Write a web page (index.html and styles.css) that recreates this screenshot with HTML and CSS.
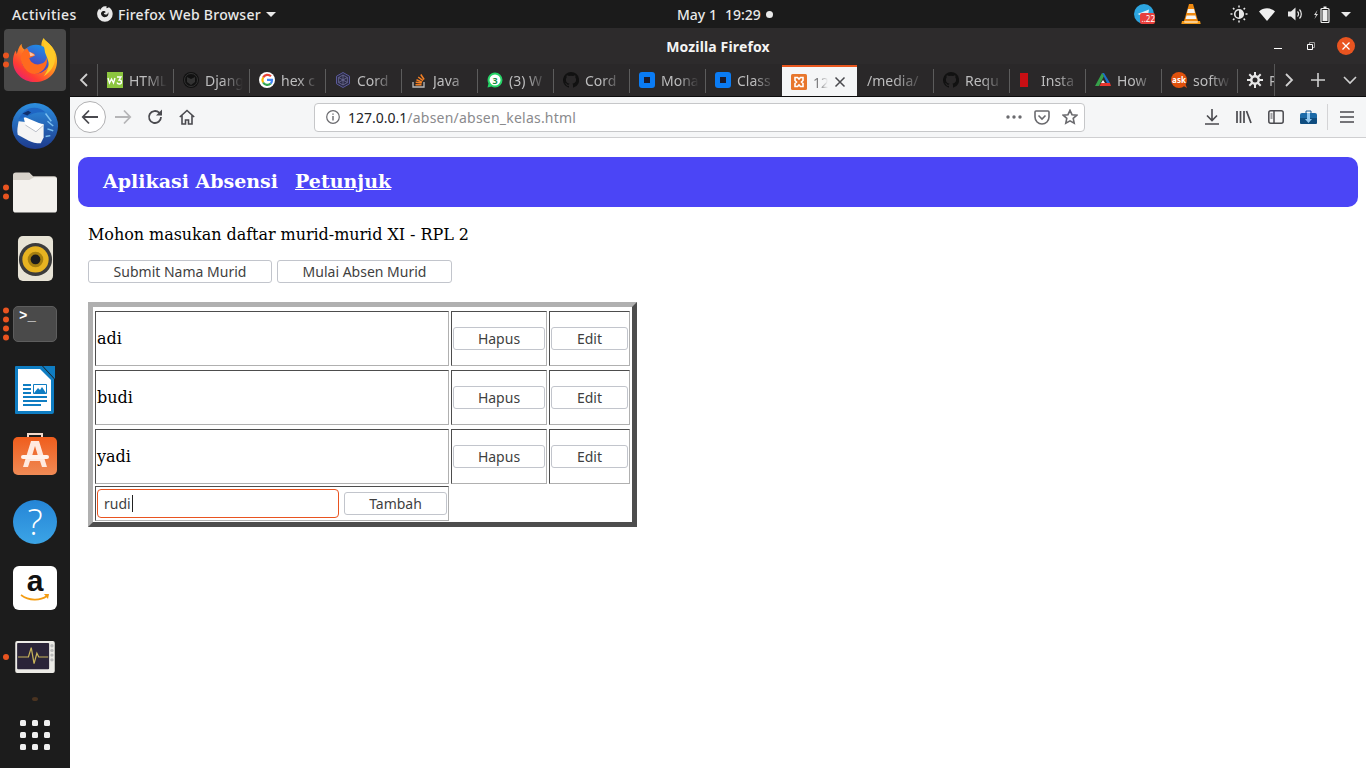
FILE: index.html
```html
<!DOCTYPE html>
<html lang="id">
<head>
<meta charset="utf-8">
<title>Mozilla Firefox</title>
<link rel="stylesheet" href="styles.css">
</head>
<body>
<header class="topbar">
  <div class="top-left">
    <span class="activities">Activities</span>
    <svg class="top-ff" width="18" height="18" viewBox="0 0 18 18"><path fill="#e8e8e8" d="M9 1.200c.6 0 1.200.1 1.800.2-.5.6-.5 1.300-.2 1.900 1.200-.3 2.200-1.300 2.400-1 2.200 1.400 3.700 3.800 3.700 6.700a7.800 7.800 0 1 1-15.600 0c0-2.200.9-4.200 2.300-5.600.1.800.4 1.300.8 1.700C4.900 3.300 6.800 1.200 9 1.200z"/><path fill="#1b1b1b" d="M6.200 6.500c1.500-.9 3-.2 3.600.7-.8.5-1.600.6-2 1 .3 1 1.500 1.700 2.700 1.300 1.100-.3 1.600-1.300 1.500-2.500 1.100 2 .1 4.500-2.100 5.100-2.300.6-4.500-.8-4.900-3-.1-1 .3-1.900 1.200-2.600z"/></svg>
    <span class="app-name">Firefox Web Browser</span>
    <span class="caret"></span>
  </div>
  <div class="clock"><span>May 1</span><span>19:29</span><i class="clock-dot"></i></div>
  <div class="tray">
    <span class="tray-telegram"><svg width="20" height="20" viewBox="0 0 20 20"><circle cx="10" cy="10" r="10" fill="#2ca5e0"/><path fill="#dff1fa" d="M3.500 10 15 5.500 13.500 14z"/></svg><b class="tray-badge">..22</b></span>
    <svg class="tray-vlc" width="20" height="22" viewBox="0 0 20 22"><path fill="#f08a10" d="M8 1h4l5 17H3z"/><path fill="#f4f4f4" d="M7 6h6l1 4H6zM5.600 12.500h8.800l1 3.500H4.600z"/><path fill="#f59a16" d="M1 18h18l.7 3H.3z"/><path fill="#fff" d="M3 18.500h14l-.5 1h-13z"/></svg>
    <svg class="tray-sun" width="18" height="18" viewBox="0 0 18 18"><circle cx="9" cy="9" r="4.300" fill="none" stroke="#e8e8e8" stroke-width="1.600"/><path fill="#e8e8e8" d="M9 4.700a4.300 4.300 0 0 1 0 8.600z"/><path stroke="#e8e8e8" stroke-width="1.500" d="M9 .5v2M9 15.500v2M.5 9h2M15.500 9h2M3 3l1.400 1.400M13.600 13.600 15 15M3 15l1.400-1.400M13.600 4.400 15 3"/></svg>
    <svg class="tray-wifi" width="16" height="13" viewBox="0 0 16 13"><path fill="#f0f0f0" d="M0 3.500C4.500-.8 11.500-.8 16 3.500L8 13z"/></svg>
    <svg class="tray-vol" width="16" height="14" viewBox="0 0 16 14"><path fill="#e8e8e8" d="M0 4.500h3L7.500.5v13L3 9.500H0z"/><path fill="none" stroke="#e8e8e8" stroke-width="1.200" d="M9.500 4.500a3.500 3.500 0 0 1 0 5M11.500 2.500a6.500 6.500 0 0 1 0 9"/></svg>
    <svg class="tray-bat" width="16" height="17" viewBox="0 0 16 17"><path fill="#ddd" d="M3.500 4 0 9h2l-1.500 4L4 8H2z"/><rect x="7" y="2.500" width="8" height="14" rx="1" fill="none" stroke="#eee" stroke-width="1.200"/><rect x="9.500" y=".5" width="3" height="2" fill="#eee"/><rect x="8.500" y="4" width="5" height="11" fill="#eee"/></svg>
    <span class="caret"></span>
  </div>
</header>

<nav class="dock">
  <div class="dock-item is-active">
    <span class="pips"><i></i><i></i></span>
    <svg width="46" height="46" viewBox="0 0 48 48"><defs><linearGradient id="ffa" x1="0.900" y1="0" x2="0.100" y2="1"><stop offset="0" stop-color="#ffe226"/><stop offset=".4" stop-color="#ff9a1e"/><stop offset=".75" stop-color="#ff3d33"/><stop offset="1" stop-color="#e31587"/></linearGradient><linearGradient id="ffb" x1="0.700" y1="0" x2="0.300" y2="1"><stop offset="0" stop-color="#1d8fe8"/><stop offset="1" stop-color="#5b2bb0"/></linearGradient></defs><path fill="url(#ffa)" d="M24 47C11 47 1 37 1 25c0-4 1-8 3-11l1 4c1-4 2-8 5-11 0 3 1 5 3 6 3-2 7-3 11-3 3 0 5 0 7 1-1-3 0-7 2-10 2 4 7 6 10 11 3 4 4 9 4 13 0 13-10 22-23 22z"/><circle cx="25" cy="23" r="15" fill="url(#ffb)"/><path fill="#ffca28" d="M34 3c6 4 11 10 11 19 0 8-5 15-12 19 3-4 6-9 5-15-1-5-4-9-4-13-1-4-1-7 0-10z"/><path fill="#ff6a1f" d="M9 23c0-5 3-9 7-11l2 4c3 0 5 1 6 3-1 1-4 2-6 3 1 5 7 8 12 6 4-1 6-4 6-7 2 7-2 14-9 17-7 2-15-2-18-15z"/><path fill="#ffe6d8" d="M18 15l6 4-5 1z" opacity=".7"/></svg>
  </div>
  <div class="dock-item">
    <svg width="48" height="48" viewBox="0 0 50 50"><defs><linearGradient id="tb" x1="0.500" y1="0" x2="0.500" y2="1"><stop offset="0" stop-color="#2d8fe0"/><stop offset="1" stop-color="#1d3a8c"/></linearGradient></defs><circle cx="25" cy="25" r="24" fill="url(#tb)"/><path fill="none" stroke="#7cc0f0" stroke-width="1.500" d="M36 12l6 8M38 20l6 5M38 28l6 2M36 36l5-1"/><path fill="#f4f4f4" d="M8 20l26 3 0 14-3 6c-5 0-9-1-13-3L7 34c-1-4 0-9 1-14z"/><path fill="#fff" d="M13 15 34 24 26 31 15 24z"/><path fill="none" stroke="#b8bcc6" d="M15 24l11 7 8-7"/><path fill="#1f66c4" d="M8 18c3-7 9-12 16-12 5 0 9 2 12 5-7-1-15 1-21 5z"/><path fill="#10306e" d="M12 12l6-3 3 2-4 3z"/></svg>
  </div>
  <div class="dock-item">
    <span class="pips"><i></i><i></i></span>
    <svg width="44" height="41" viewBox="0 0 46 42"><path fill="#d7d2ca" d="M3 0h14l4 4h22a3 3 0 0 1 3 3v6H0V3a3 3 0 0 1 3-3z"/><path fill="#f3f1ed" d="M0 8h17l5-3h21a3 3 0 0 1 3 3v31a3 3 0 0 1-3 3H3a3 3 0 0 1-3-3z"/></svg>
  </div>
  <div class="dock-item">
    <svg width="37" height="45" viewBox="0 0 38 46"><rect width="36" height="46" x="1" rx="5" fill="#e7e3d6"/><circle cx="19" cy="24" r="17" fill="#3c3c3c"/><circle cx="19" cy="24" r="13.500" fill="#e7b321"/><circle cx="19" cy="24" r="8" fill="#a67f10"/><circle cx="19" cy="24" r="5" fill="#1c1c1c"/></svg>
  </div>
  <div class="dock-item">
    <span class="pips"><i></i><i></i><i></i><i></i></span>
    <span class="terminal"><span>&gt;_</span></span>
  </div>
  <div class="dock-item">
    <svg width="40" height="48" viewBox="0 0 40 48"><path fill="#0f7dc2" d="M1 0h26l12 13v33a2 2 0 0 1-2 2H1a1 1 0 0 1-1-1V1a1 1 0 0 1 1-1z"/><path fill="#fff" d="M3 3h22l11 11v31H3z"/><path fill="#0f7dc2" d="M28 0h12v13zM8 18h8v2H8zM8 22h8v2H8zM8 26h8v2H8zM8 30h24v2H8zM8 34h24v2H8zM8 38h18v2H8z"/><path fill="none" stroke="#0f7dc2" d="M18.500 18.500h13v9h-13z"/><path fill="#0f7dc2" d="M19 27l4-5 2 2 2-3 4 6z"/></svg>
  </div>
  <div class="dock-item">
    <svg width="44" height="47" viewBox="0 0 44 47"><defs><linearGradient id="sw" x1="0" y1="0" x2="0" y2="1"><stop offset="0" stop-color="#f05d1c"/><stop offset="1" stop-color="#ef8a55"/></linearGradient></defs><path fill="none" stroke="#f4d9cb" stroke-width="2" d="M15 7V1h14v6"/><rect y="4" width="44" height="38" rx="5" fill="url(#sw)"/><path fill="#ffe9df" d="M18 8h8l8 26h-5l-2-6H17l-2 6h-5zM19 23h6l-3-10z"/><rect x="8" y="22" width="28" height="4" rx="2" fill="#fff3ed"/></svg>
  </div>
  <div class="dock-item"><span class="help">?</span></div>
  <div class="dock-item">
    <span class="amazon"><b>a</b><svg width="30" height="8" viewBox="0 0 30 8"><path fill="none" stroke="#f39c12" stroke-width="1.600" d="M1 1c8 6 19 6 26 1"/><path fill="#f39c12" d="M24 0h5l-1 5z"/></svg></span>
  </div>
  <div class="dock-item dock-monitor">
    <span class="pips"><i></i></span>
    <svg width="42" height="32" viewBox="0 0 42 34"><rect width="42" height="34" rx="2" fill="#ecebe6"/><rect x="2" y="2" width="34" height="28" rx="1" fill="#2a2438"/><path fill="none" stroke="#c8b45a" stroke-width="1.300" d="M3 17h11l3-10 3 17 3-11 2 4h10"/><circle cx="39" cy="5" r="1.800" fill="#bbb"/><circle cx="39" cy="10" r="1.800" fill="#bbb"/><circle cx="39" cy="15" r="1.800" fill="#bbb"/><circle cx="39" cy="20" r="1.800" fill="#bbb"/></svg>
  </div>
  <i class="dock-dim"></i>
  <div class="apps-grid"><i></i><i></i><i></i><i></i><i></i><i></i><i></i><i></i><i></i></div>
</nav>

<div class="browser">
  <div class="titlebar">
    <span></span>
    <span class="win-title">Mozilla Firefox</span>
    <span class="win-controls">
      <svg class="win-min" width="10" height="10" viewBox="0 0 10 10"><path stroke="#fff" d="M1 7.500h8"/></svg>
      <svg width="10" height="10" viewBox="0 0 10 10"><path fill="none" stroke="#fff" d="M1.500 3.500h5v5h-5z"/><path fill="none" stroke="#999" d="M3.500 3V1.500h5v5H7"/></svg>
      <svg width="18" height="18" viewBox="0 0 18 18"><circle cx="9" cy="9" r="9" fill="#e95420"/><path stroke="#fff" stroke-width="1.300" d="M5.500 5.500l7 7M12.500 5.500l-7 7"/></svg>
    </span>
  </div>

  <div class="tabstrip">
    <span class="strip-btn strip-left"><svg width="10" height="14" viewBox="0 0 10 14"><path fill="none" stroke="#d0d0d0" stroke-width="1.800" d="M8 1 2 7l6 6"/></svg></span>
    <div class="tabs">
      <div class="tab"><svg width="16" height="16" viewBox="0 0 16 16"><rect width="16" height="16" fill="#8cc63f"/><path fill="none" stroke="#fff" stroke-width="1.300" d="M1 6l1.500 5L4.500 7l2 4L8 6M10 5h4l-2 3c2 0 2.500 1 2.500 2s-1 2-2.200 2-2-.5-2.300-1.500"/></svg><span class="tab-label">HTML</span></div>
      <div class="tab"><svg width="16" height="16" viewBox="0 0 16 16"><circle cx="8" cy="8" r="8" fill="#111"/><circle cx="8" cy="8" r="6.500" fill="none" stroke="#333"/><path fill="#333" d="M4 5l4 2 4-2v5l-4 3-4-3z"/></svg><span class="tab-label">Djang</span></div>
      <div class="tab"><svg width="16" height="16" viewBox="0 0 16 16"><circle cx="8" cy="8" r="8" fill="#fff"/><path fill="none" stroke="#ea4335" stroke-width="2.200" d="M12 4.300A5 5 0 0 0 4.100 5.500"/><path fill="none" stroke="#fbbc05" stroke-width="2.200" d="M4.100 5.500a5 5 0 0 0 0 5"/><path fill="none" stroke="#34a853" stroke-width="2.200" d="M4.100 10.500a5 5 0 0 0 7.700 1"/><path fill="none" stroke="#4285f4" stroke-width="2.200" d="M11.800 11.500A5 5 0 0 0 13 7.900H8"/></svg><span class="tab-label">hex c</span></div>
      <div class="tab"><svg width="16" height="16" viewBox="0 0 16 16"><path fill="#2b2b45" stroke="#5b5a9a" d="M8 .5l6.500 3.700v7.600L8 15.500l-6.500-3.700V4.200z"/><path fill="none" stroke="#77769f" stroke-width=".7" d="M8 3l4.400 2.500v5L8 13l-4.400-2.500v-5zM8 3v10M3.600 5.500l8.800 5M12.400 5.500l-8.800 5"/></svg><span class="tab-label">Cord</span></div>
      <div class="tab"><svg width="16" height="16" viewBox="0 0 16 16"><path fill="none" stroke="#bcbbbb" stroke-width="1.300" d="M2 10v5h11v-5"/><path stroke="#f48024" stroke-width="1.500" d="M4.500 12.800h6M4.700 10.300l6 .8M5.500 7.800l5.600 2.300M7.200 5l4.800 3.700M9.800 2.500l3.300 5"/></svg><span class="tab-label">Java</span></div>
      <div class="tab"><svg width="16" height="16" viewBox="0 0 16 16"><path fill="#25d366" d="M8 .5a7.500 7.500 0 0 1 0 15c-1.300 0-2.500-.3-3.500-.9L.5 15.500l1-3.900A7.500 7.500 0 0 1 8 .5z"/><circle cx="8" cy="8" r="5.500" fill="#fff"/><text class="fav-three" x="8" y="11.500" text-anchor="middle">3</text></svg><span class="tab-label">(3) W</span></div>
      <div class="tab"><svg width="16" height="16" viewBox="0 0 16 16"><path fill="#111" d="M8 0a8 8 0 0 0-2.500 15.600c.4.100.5-.2.500-.4v-1.400c-2.200.5-2.700-1-2.700-1-.4-.9-.9-1.200-.9-1.200-.7-.5.100-.5.100-.5.800.1 1.200.8 1.200.8.700 1.200 1.900.9 2.300.7.100-.5.300-.9.500-1.100-1.800-.2-3.600-.9-3.600-4 0-.9.300-1.600.8-2.100-.1-.2-.4-1 .1-2.100 0 0 .7-.2 2.200.8a7.500 7.500 0 0 1 4 0c1.500-1 2.200-.8 2.200-.8.400 1.100.2 1.900.1 2.100.5.600.8 1.300.8 2.100 0 3.100-1.900 3.800-3.700 4 .3.300.6.700.6 1.500v2.200c0 .2.100.5.600.4A8 8 0 0 0 8 0z"/></svg><span class="tab-label">Cord</span></div>
      <div class="tab"><svg width="16" height="16" viewBox="0 0 16 16"><rect width="16" height="16" rx="3" fill="#0a7cf5"/><rect x="5" y="5" width="6" height="6" fill="#1b1b2b"/></svg><span class="tab-label">Mona</span></div>
      <div class="tab"><svg width="16" height="16" viewBox="0 0 16 16"><rect width="16" height="16" rx="3" fill="#0a7cf5"/><rect x="5" y="5" width="6" height="6" fill="#1b1b2b"/></svg><span class="tab-label">Class</span></div>
      <div class="tab is-active"><svg width="16" height="16" viewBox="0 0 16 16"><rect width="16" height="16" rx="1.500" fill="#e8762c"/><path fill="none" stroke="#fff" stroke-width="1.600" d="M4 3.500h2.500L8 5l1.500-1.500H12v3L10.500 8l1.500 1.500v3H9.500L8 11l-1.500 1.500H4v-3L5.500 8 4 6.500z"/></svg><span class="tab-label tab-label-short">12</span><svg class="tab-close" width="12" height="12" viewBox="0 0 12 12"><path stroke="#4a4a4f" stroke-width="1.500" d="M1.500 1.500l9 9M10.500 1.500l-9 9"/></svg></div>
      <div class="tab tab-plain"><span class="tab-label tab-label-wide">/media/</span></div>
      <div class="tab"><svg width="16" height="16" viewBox="0 0 16 16"><path fill="#111" d="M8 0a8 8 0 0 0-2.500 15.600c.4.100.5-.2.500-.4v-1.400c-2.200.5-2.700-1-2.700-1-.4-.9-.9-1.200-.9-1.200-.7-.5.100-.5.100-.5.800.1 1.200.8 1.200.8.700 1.200 1.900.9 2.300.7.100-.5.300-.9.500-1.100-1.800-.2-3.600-.9-3.600-4 0-.9.300-1.600.8-2.100-.1-.2-.4-1 .1-2.100 0 0 .7-.2 2.200.8a7.500 7.500 0 0 1 4 0c1.500-1 2.200-.8 2.200-.8.400 1.100.2 1.900.1 2.100.5.600.8 1.300.8 2.100 0 3.100-1.900 3.800-3.700 4 .3.300.6.700.6 1.500v2.200c0 .2.100.5.600.4A8 8 0 0 0 8 0z"/></svg><span class="tab-label">Requ</span></div>
      <div class="tab"><svg width="16" height="16" viewBox="0 0 16 16"><rect x="1" y="1" width="8" height="14" fill="#c80f14"/></svg><span class="tab-label">Insta</span></div>
      <div class="tab"><svg width="16" height="16" viewBox="0 0 16 16"><path fill="#1c6fc9" d="M7 1h2l6 10h-3L8.500 4z"/><path fill="#36a04a" d="M7 1l2 3-5 10H0z"/><path fill="#e8362f" d="M6 11h9l1 3H4.500z"/><path fill="#f2f2f2" d="M8 8l2 3H6z"/></svg><span class="tab-label">How</span></div>
      <div class="tab"><svg width="16" height="16" viewBox="0 0 16 16"><circle cx="8" cy="8" r="8" fill="#e0510d"/><path fill="#e0510d" d="M11 13l5 3-2-5z"/><text class="fav-ask" x="8" y="10.500" text-anchor="middle">ask</text></svg><span class="tab-label">softw</span></div>
      <div class="tab"><svg width="16" height="16" viewBox="0 0 16 16"><g stroke="#e6e6e6" stroke-width="2"><path d="M8 0v16M0 8h16M2.300 2.300l11.400 11.400M13.700 2.300 2.300 13.700"/></g><circle cx="8" cy="8" r="5" fill="#e6e6e6"/><circle cx="8" cy="8" r="2.500" fill="#2a2829"/></svg><span class="tab-label tab-label-last">P</span></div>
    </div>
    <span class="strip-btn strip-right"><svg width="10" height="14" viewBox="0 0 10 14"><path fill="none" stroke="#d0d0d0" stroke-width="1.800" d="M2 1l6 6-6 6"/></svg></span>
    <span class="strip-btn strip-plus"><svg width="14" height="14" viewBox="0 0 14 14"><path stroke="#d0d0d0" stroke-width="1.600" d="M7 0v14M0 7h14"/></svg></span>
    <span class="strip-btn strip-down"><svg width="14" height="10" viewBox="0 0 14 10"><path fill="none" stroke="#d0d0d0" stroke-width="1.600" d="M1 2l6 6 6-6"/></svg></span>
  </div>

  <div class="toolbar">
    <span class="back-btn"><svg width="18" height="16" viewBox="0 0 18 16"><path fill="none" stroke="#4a4a4f" stroke-width="1.800" d="M17 8H2M8 1.500 1.800 8 8 14.500"/></svg></span>
    <span class="tool-btn tool-forward"><svg width="18" height="16" viewBox="0 0 18 16"><path fill="none" stroke="#b5b5b7" stroke-width="1.800" d="M1 8h15M10 1.500 16.200 8 10 14.500"/></svg></span>
    <span class="tool-btn"><svg width="16" height="16" viewBox="0 0 16 16"><path fill="none" stroke="#4a4a4f" stroke-width="1.800" d="M14 8a6 6 0 1 1-1.800-4.300L14 5.500"/><path fill="#4a4a4f" d="M15 .5v6H9z"/></svg></span>
    <span class="tool-btn"><svg width="16" height="16" viewBox="0 0 16 16"><path fill="none" stroke="#4a4a4f" stroke-width="1.600" d="M.8 8 8 1.500 15.200 8M3 6.500V15h3.500v-4h3v4H13V6.500"/></svg></span>
    <div class="urlbar">
      <svg class="url-info" width="14" height="14" viewBox="0 0 14 14"><circle cx="7" cy="7" r="6.300" fill="none" stroke="#6a6a6e" stroke-width="1.200"/><path fill="#6a6a6e" d="M6.300 6h1.400v4.500H6.300zM6.300 3.400h1.400v1.400H6.300z"/></svg>
      <span class="url-text"><span class="url-host">127.0.0.1</span>/absen/absen_kelas.html</span>
      <span class="url-actions">
        <svg width="16" height="4" viewBox="0 0 16 4"><g fill="#6a6a6e"><circle cx="2" cy="2" r="1.700"/><circle cx="8" cy="2" r="1.700"/><circle cx="14" cy="2" r="1.700"/></g></svg>
        <svg width="16" height="15" viewBox="0 0 16 15"><path fill="none" stroke="#6a6a6e" stroke-width="1.600" d="M2 1h12a1 1 0 0 1 1 1v5a7 7 0 0 1-14 0V2a1 1 0 0 1 1-1z"/><path fill="none" stroke="#6a6a6e" stroke-width="1.600" d="M4.500 5.500 8 9l3.500-3.500"/></svg>
        <svg width="16" height="16" viewBox="0 0 16 16"><path fill="none" stroke="#6a6a6e" stroke-width="1.600" d="M8 1.300l2 4.400 4.800.5-3.600 3.200 1 4.800L8 11.800l-4.200 2.400 1-4.800L1.200 6.200 6 5.700z"/></svg>
      </span>
    </div>
    <div class="tool-right">
      <svg width="14" height="16" viewBox="0 0 14 16"><path fill="none" stroke="#4a4a4f" stroke-width="1.600" d="M7 0v11M2 6.500 7 11.500l5-5M0 15h14"/></svg>
      <svg class="tool-library" width="16" height="14" viewBox="0 0 16 14"><path stroke="#4a4a4f" stroke-width="1.700" d="M1 1v12M4.500 1v12M8 1v12M10.500 1l4.500 12"/></svg>
      <svg width="16" height="14" viewBox="0 0 16 14"><rect x=".8" y=".8" width="14.400" height="12.400" rx="2" fill="none" stroke="#4a4a4f" stroke-width="1.500"/><path stroke="#4a4a4f" stroke-width="1.500" d="M6 1v12"/><path stroke="#4a4a4f" d="M2.500 4h2M2.500 6h2M2.500 8h2"/></svg>
      <svg width="17" height="14" viewBox="0 0 17 14"><path fill="none" stroke="#1b5b94" d="M6 3V1h5v2"/><path fill="#1c6aa8" d="M0 5q0-2 2-2h13q2 0 2 2v3H0z"/><path fill="#0f4d80" d="M0 8h17v5a1 1 0 0 1-1 1H1a1 1 0 0 1-1-1z"/><path fill="#8fc6ef" d="M7 3h3v6h2l-3.500 4L5 9h2z"/></svg>
      <span class="tool-sep"></span>
      <svg width="14" height="12" viewBox="0 0 14 12"><path stroke="#4a4a4f" stroke-width="1.700" d="M0 1h14M0 6h14M0 11h14"/></svg>
    </div>
  </div>

  <main class="page">
    <div class="banner"><strong>Aplikasi Absensi</strong><a href="#petunjuk">Petunjuk</a></div>
    <div class="body-col">
      <p class="lead">Mohon masukan daftar murid-murid XI - RPL 2</p>
      <div class="actions">
        <button class="btn btn-submit" type="button">Submit Nama Murid</button>
        <button class="btn btn-start" type="button">Mulai Absen Murid</button>
      </div>
      <div class="roster">
        <div class="row">
          <div class="cell cell-name">adi</div>
          <div class="cell cell-del"><button class="btn btn-cell" type="button">Hapus</button></div>
          <div class="cell cell-edit"><button class="btn btn-cell" type="button">Edit</button></div>
        </div>
        <div class="row">
          <div class="cell cell-name">budi</div>
          <div class="cell cell-del"><button class="btn btn-cell" type="button">Hapus</button></div>
          <div class="cell cell-edit"><button class="btn btn-cell" type="button">Edit</button></div>
        </div>
        <div class="row">
          <div class="cell cell-name">yadi</div>
          <div class="cell cell-del"><button class="btn btn-cell" type="button">Hapus</button></div>
          <div class="cell cell-edit"><button class="btn btn-cell" type="button">Edit</button></div>
        </div>
        <div class="row row-entry">
          <div class="cell cell-entry">
            <div class="field"><span>rudi</span><i class="field-caret"></i></div>
            <button class="btn btn-add" type="button">Tambah</button>
          </div>
        </div>
      </div>
    </div>
  </main>
</div>
</body>
</html>
```

FILE: styles.css
```css
* { box-sizing: border-box; }
html, body { margin: 0; height: 100%; }
body {
  width: 1366px;
  height: 768px;
  overflow: hidden;
  display: grid;
  grid-template-columns: 70px 1fr;
  grid-template-rows: 28px 1fr;
  font-family: "Liberation Serif", serif;
  background: #1c1c1c;
}

/* top bar */
.topbar {
  grid-column: 1 / 3;
  display: flex;
  align-items: center;
  background: #1b1b1b;
  color: #e9e9e9;
  font: 500 14px "Noto Sans", sans-serif;
}
.top-left { display: flex; align-items: center; width: 677px; padding-left: 12px; }
.activities { width: 84px; letter-spacing: .45px; }
.top-ff { margin-right: 4px; }
.app-name { letter-spacing: .27px; }
.caret {
  width: 0; height: 0;
  border-left: 5px solid transparent;
  border-right: 5px solid transparent;
  border-top: 5px solid #e9e9e9;
}
.top-left .caret { margin-left: 5px; }
.clock { display: flex; align-items: center; gap: 8px; }
.clock-dot { width: 7px; height: 7px; border-radius: 50%; background: #e9e9e9; margin-left: -3px; }
.tray { display: flex; align-items: center; margin-left: auto; padding-right: 15px; }
.tray-telegram { position: relative; display: flex; margin-right: 27px; }
.tray-badge {
  position: absolute; right: -1px; bottom: 0;
  width: 15px; height: 11px; border-radius: 2px;
  background: #e8403c; color: #fff;
  font: 400 8px/11px "Noto Sans", sans-serif; text-align: right;
}
.tray-vlc { margin-right: 29px; }
.tray-sun { margin-right: 11px; }
.tray-wifi { margin-right: 13px; }
.tray-vol { margin-right: 10px; }
.tray-bat { margin-right: 11px; }

/* dock */
.dock {
  background: #1c1c1c;
  display: flex;
  flex-direction: column;
  align-items: center;
  padding-top: 1px;
  position: relative;
}
.dock-item {
  position: relative;
  width: 62px;
  height: 66px;
  flex: none;
  display: flex;
  align-items: center;
  justify-content: center;
}
.dock-item.is-active { height: 62px; margin: 0 0 2px; border-radius: 4px; background: #494949; }
.pips {
  position: absolute;
  left: -1px;
  top: 50%;
  transform: translateY(-50%);
  display: flex;
  flex-direction: column;
  gap: 3px;
}
.pips i { display: block; width: 6px; height: 6px; border-radius: 50%; background: #e95420; }
.terminal {
  width: 44px; height: 36px;
  display: block;
  padding: 2px 0 0 5px;
  border-radius: 5px;
  background: #4a4a4a;
  border: 1px solid #5e5e5e;
  color: #fff;
  font: 700 14px/15px "Liberation Mono", monospace;
}
.help {
  width: 44px; height: 44px;
  border-radius: 50%;
  background: linear-gradient(#2585d6, #3ba4e6);
  color: #fff;
  text-align: center;
  font: 300 36px/44px "Open Sans", sans-serif;
}
.amazon {
  width: 44px; height: 44px;
  border-radius: 6px;
  background: #fff;
  display: flex;
  flex-direction: column;
  align-items: center;
  color: #111;
}
.amazon b { font: 700 30px/28px "Liberation Sans", sans-serif; margin-top: 1px; height: 28px; }
.amazon svg { margin-top: -1px; }
.dock-monitor { height: 72px; }
.dock-dim { width: 6px; height: 4px; margin-top: 4px; border-radius: 50%; background: #4a3320; }
.apps-grid {
  position: absolute;
  left: 20px;
  bottom: 18px;
  display: grid;
  grid-template-columns: repeat(3, 6px);
  gap: 6px;
}
.apps-grid i { width: 6px; height: 6px; border-radius: 1.500px; background: #f2f2f2; }

/* browser */
.browser { display: flex; flex-direction: column; background: #fff; min-width: 0; }
.titlebar {
  height: 36px;
  background: #2d2b2c;
  display: grid;
  grid-template-columns: 1fr auto 1fr;
  align-items: center;
  color: #f4f4f4;
  font: 700 14px "Noto Sans", sans-serif;
  letter-spacing: .15px;
}
.win-controls {
  display: flex;
  align-items: center;
  justify-content: flex-end;
  gap: 21px;
  padding-right: 11px;
}
.win-min { margin-right: 2px; }
.tabstrip {
  height: 33px;
  background: #2a2829;
  border-bottom: 1px solid #0c0c0d;
  display: flex;
  align-items: stretch;
}
.strip-btn { display: flex; align-items: center; justify-content: center; flex: none; }
.strip-left { width: 28px; border-right: 1px solid #555; }
.strip-right { width: 28px; border-left: 1px solid #555; }
.strip-plus { width: 32px; }
.strip-down { width: 32px; }
.tabs { display: flex; width: 1176px; overflow: hidden; flex: none; }
.tab {
  position: relative;
  flex: 0 0 76px;
  display: flex;
  align-items: center;
  gap: 6px;
  padding-left: 9px;
  color: #bdbdbe;
  font: 400 14px "Noto Sans", sans-serif;
}
.tab:not(:first-child)::before {
  content: "";
  position: absolute;
  left: -1px;
  top: 5px;
  bottom: 3px;
  width: 1px;
  background: #5c5c5c;
}
.tab > svg { flex: none; }
.tab-label {
  display: block;
  width: 38px;
  overflow: hidden;
  white-space: nowrap;
  -webkit-mask-image: linear-gradient(90deg, #000 45%, transparent);
  mask-image: linear-gradient(90deg, #000 45%, transparent);
}
.tab-label-wide { width: 60px; }
.tab-label-last { width: 14px; }
.tab.is-active {
  flex-basis: 75px;
  margin-top: 1px;
  margin-bottom: -1px;
  background: #f5f6f7;
  border-top: 2px solid #e8571f;
  color: #7d7d7f;
  z-index: 1;
}
.tab.is-active::before,
.tab.is-active + .tab::before { display: none; }
.tab-plain { flex-basis: 77px; padding-left: 10px; }
.tab-label-short { width: 15px; }
.tab-close { flex: none; }
.fav-three { font: 700 9px "Noto Sans", sans-serif; fill: #128c3e; }
.fav-ask { font: 700 8px "Noto Sans", sans-serif; fill: #fff; }

.toolbar {
  height: 41px;
  flex: none;
  background: #f5f6f7;
  border-bottom: 1px solid #cfcfd1;
  display: flex;
  align-items: center;
  padding-left: 4px;
}
.back-btn {
  width: 32px; height: 32px;
  flex: none;
  border-radius: 50%;
  background: #fff;
  border: 1px solid #b1b1b3;
  display: flex; align-items: center; justify-content: center;
}
.tool-btn { width: 32px; height: 32px; flex: none; display: flex; align-items: center; justify-content: center; }
.tool-forward { margin-left: 1px; }
.urlbar {
  width: 771px;
  height: 29px;
  margin-left: 111px;
  flex: none;
  display: flex;
  align-items: center;
  background: #fff;
  border: 1px solid #c6c7c9;
  border-radius: 4px;
  padding: 0 6px 0 11px;
}
.url-info { flex: none; }
.url-text { margin-left: 8px; color: #8a8a8d; font: 400 14px "Noto Sans", sans-serif; letter-spacing: .22px; }
.url-host { color: #232327; letter-spacing: 0; }
.url-actions { margin-left: auto; display: flex; align-items: center; gap: 12px; }
.tool-right { display: flex; align-items: center; gap: 16px; margin-left: 120px; }
.tool-library { margin-left: 1px; }
.tool-sep { width: 1px; height: 26px; background: #d4d4d6; margin: 0 -4px 0 -6px; }

/* page */
.page { flex: 1; background: #fff; padding: 19px 8px 0; min-height: 0; }
.banner {
  height: 50px;
  display: flex;
  align-items: center;
  gap: 17px;
  padding: 0 0 2px 25px;
  border-radius: 10px;
  background: #4b45f6;
  color: #fff;
  font: 700 19px "DejaVu Serif", serif;
}
.banner strong { font-weight: 700; }
.banner a { color: #fff; }
.body-col { padding-left: 10px; }
.lead { margin: 18px 0 0; height: 20px; color: #000; font: 400 16px/20px "DejaVu Serif", serif; letter-spacing: -.05px; }
.actions { display: flex; gap: 5px; margin-top: 15px; }
.btn {
  height: 23px;
  padding: 0;
  background: #fff;
  border: 1px solid #c2c5cc;
  border-radius: 3px;
  color: #3f3f3f;
  font: 400 14px "Noto Sans", sans-serif;
}
.btn-submit { width: 184px; }
.btn-start { width: 175px; }
.roster {
  width: 549px;
  height: 225px;
  margin-top: 19px;
  border: 5px solid;
  border-color: #b0b0b0 #4d4d4d #4d4d4d #b0b0b0;
  padding: 4px 2px 0;
  display: flex;
  flex-direction: column;
}
.row { display: flex; gap: 2px; }
.row + .row { margin-top: 4px; }
.row-entry.row { margin-top: 2px; }
.cell {
  height: 55px;
  display: flex;
  align-items: center;
  padding: 1px;
  border: 1px solid;
  border-color: #4d4d4d #b0b0b0 #b0b0b0 #4d4d4d;
  color: #000;
  font: 400 16px "DejaVu Serif", serif;
}
.cell-name { width: 354px; }
.cell-del { width: 96px; }
.cell-edit { width: 81px; }
.btn-cell { width: 100%; }
.cell-entry { width: 354px; height: 35px; gap: 5px; }
.field {
  width: 242px;
  height: 29px;
  flex: none;
  display: flex;
  align-items: center;
  padding-left: 6px;
  border: 1px solid #e95420;
  border-radius: 4px;
  color: #3f3f3f;
  font: 400 14px "Noto Sans", sans-serif;
}
.field-caret { width: 1px; height: 17px; background: #222; margin-left: 1px; }
.btn-add { width: 103px; height: 23px; }
```
